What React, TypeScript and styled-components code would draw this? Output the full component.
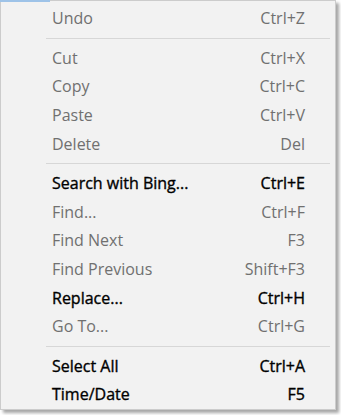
import React from "react";
import styled, { createGlobalStyle } from "styled-components";

const GlobalStyle = createGlobalStyle`
  html, body {
    margin: 0;
    padding: 0;
    background: #ffffff;
  }
  body {
    font-family: "Open Sans", "Noto Sans", sans-serif;
  }
`;

const Frame = styled.div`
  position: relative;
  width: 341px;
  height: 415px;
  background: #ffffff;
`;

const TopStrip = styled.div`
  position: absolute;
  top: 0;
  left: 0;
  width: 50px;
  height: 2px;
  background: #9ec3e8;
`;

const Menu = styled.div`
  box-sizing: border-box;
  width: 336px;
  height: 410px;
  background: #f2f2f2;
  border: 1px solid #cccccc;
  box-shadow: 3px 3px 3px rgba(0, 0, 0, 0.35);
  padding: 3px 2px;
  display: flex;
  flex-direction: column;
`;

const Item = styled.div<{ $enabled?: boolean }>`
  height: 28.6px;
  flex-shrink: 0;
  display: grid;
  grid-template-columns: 1fr auto;
  align-items: center;
  padding: 0 28px 0 49px;
  font-size: 16px;
  color: ${(p) => (p.$enabled ? "#000000" : "#707070")};
  -webkit-text-stroke: ${(p) => (p.$enabled ? "0.35px #000000" : "0")};
`;

const Shortcut = styled.span`
  text-align: right;
`;

const Separator = styled.div`
  height: 11px;
  flex-shrink: 0;
  display: flex;
  align-items: center;
  padding-left: 43px;
  padding-right: 3px;

  &::after {
    content: "";
    flex: 1;
    height: 1px;
    background: #d7d7d7;
  }
`;

type Entry = { label: string; key: string; enabled?: boolean } | "sep";

const entries: Entry[] = [
  { label: "Undo", key: "Ctrl+Z" },
  "sep",
  { label: "Cut", key: "Ctrl+X" },
  { label: "Copy", key: "Ctrl+C" },
  { label: "Paste", key: "Ctrl+V" },
  { label: "Delete", key: "Del" },
  "sep",
  { label: "Search with Bing...", key: "Ctrl+E", enabled: true },
  { label: "Find...", key: "Ctrl+F" },
  { label: "Find Next", key: "F3" },
  { label: "Find Previous", key: "Shift+F3" },
  { label: "Replace...", key: "Ctrl+H", enabled: true },
  { label: "Go To...", key: "Ctrl+G" },
  "sep",
  { label: "Select All", key: "Ctrl+A", enabled: true },
  { label: "Time/Date", key: "F5", enabled: true },
];

const App: React.FC = () => {
  return (
    <>
      <GlobalStyle />
      <Frame>
        <TopStrip />
        <Menu>
          {entries.map((e, i) =>
            e === "sep" ? (
              <Separator key={i} />
            ) : (
              <Item key={i} $enabled={e.enabled}>
                <span>{e.label}</span>
                <Shortcut>{e.key}</Shortcut>
              </Item>
            )
          )}
        </Menu>
      </Frame>
    </>
  );
};

export default App;
